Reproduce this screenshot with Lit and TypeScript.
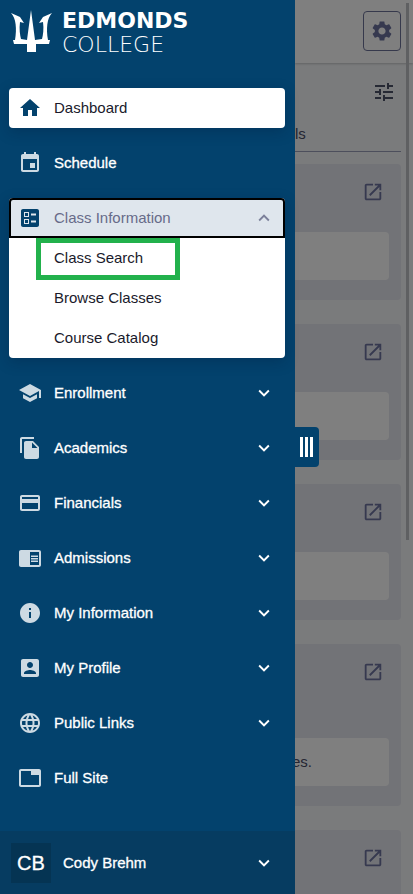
import { LitElement, html, css, svg, nothing } from "lit";
import { customElement, state } from "lit/decorators.js";

const icons: Record<string, string> = {
  home: "M10 20v-6h4v6h5v-8h3L12 3 2 12h3v8z",
  event: "M17 12h-5v5h5v-5zM16 1v2H8V1H6v2H5c-1.11 0-1.99.9-1.99 2L3 19c0 1.1.89 2 2 2h14c1.1 0 2-.9 2-2V5c0-1.1-.9-2-2-2h-1V1h-2zm3 18H5V8h14v11z",
  ballot: "M13 9.5h5v-2h-5v2zm0 7h5v-2h-5v2zm6 4.5H5c-1.100 0-2-.9-2-2V5c0-1.100.9-2 2-2h14c1.100 0 2 .9 2 2v14c0 1.100-.9 2-2 2zM6 11h5V6H6v5zm1-4h3v3H7V7zM6 18h5v-5H6v5zm1-4h3v3H7v-3z",
  school: "M5 13.180v4L12 21l7-3.820v-4L12 17l-7-3.820zM12 3L1 9l11 6 9-4.910V17h2V9L12 3z",
  copy: "M16 1H4c-1.100 0-2 .9-2 2v14h2V3h12V1zm-1 4l6 6v10c0 1.100-.9 2-2 2H7.990C6.890 23 6 22.100 6 21l.01-14c0-1.100.89-2 1.990-2h7zm-1 7h5.500L14 6.500V12z",
  card: "M20 4H4c-1.110 0-1.990.89-1.990 2L2 18c0 1.110.89 2 2 2h16c1.110 0 2-.89 2-2V6c0-1.110-.89-2-2-2zm0 14H4v-6h16v6zm0-10H4V6h16v2z",
  reader: "M13 12h7v1.500h-7V12zm0-2.500h7V11h-7V9.500zm0 5h7V16h-7v-1.500zM21 4H3c-1.100 0-2 .9-2 2v13c0 1.100.9 2 2 2h18c1.100 0 2-.9 2-2V6c0-1.100-.9-2-2-2zm0 15h-9V6h9v13z",
  info: "M12 2C6.480 2 2 6.480 2 12s4.480 10 10 10 10-4.480 10-10S17.520 2 12 2zm1 15h-2v-6h2v6zm0-8h-2V7h2v2z",
  profile: "M3 5v14c0 1.100.89 2 2 2h14c1.100 0 2-.9 2-2V5c0-1.100-.9-2-2-2H5c-1.110 0-2 .9-2 2zm12 4c0 1.660-1.340 3-3 3s-3-1.340-3-3 1.340-3 3-3 3 1.340 3 3zm-9 8c0-2 4-3.100 6-3.100s6 1.100 6 3.100v1H6v-1z",
  globe: "M11.990 2C6.470 2 2 6.480 2 12s4.470 10 9.990 10C17.520 22 22 17.520 22 12S17.520 2 11.990 2zm6.930 6h-2.950c-.32-1.250-.78-2.450-1.380-3.560 1.840.63 3.370 1.910 4.330 3.560zM12 4.040c.83 1.200 1.480 2.530 1.910 3.960h-3.820c.43-1.430 1.080-2.760 1.910-3.960zM4.260 14C4.100 13.360 4 12.690 4 12s.1-1.360.26-2h3.380c-.08.66-.14 1.320-.14 2s.06 1.340.14 2H4.260zm.82 2h2.950c.32 1.250.78 2.450 1.380 3.560-1.840-.63-3.370-1.900-4.330-3.560zm2.950-8H5.080c.96-1.660 2.490-2.930 4.330-3.560C8.810 5.550 8.350 6.750 8.030 8zM12 19.960c-.83-1.200-1.480-2.530-1.910-3.960h3.820c-.43 1.430-1.080 2.760-1.910 3.960zM14.340 14H9.660c-.09-.66-.16-1.320-.16-2s.07-1.350.16-2h4.680c.09.65.16 1.320.16 2s-.07 1.340-.16 2zm.25 5.560c.6-1.110 1.060-2.310 1.380-3.560h2.950c-.96 1.650-2.490 2.930-4.330 3.560zM16.360 14c.08-.66.14-1.320.14-2s-.06-1.340-.14-2h3.380c.16.64.26 1.310.26 2s-.1 1.360-.26 2h-3.380z",
  tab: "M21 3H3c-1.100 0-2 .9-2 2v14c0 1.100.9 2 2 2h18c1.100 0 2-.9 2-2V5c0-1.100-.9-2-2-2zm0 16H3V5h10v4h8v10z",
  more: "M16.590 8.590L12 13.170 7.410 8.590 6 10l6 6 6-6z",
  less: "M12 8l-6 6 1.410 1.410L12 10.830l4.590 4.580L18 14z",
  gear: "M19.140 12.940c.04-.3.06-.61.06-.94 0-.32-.02-.64-.07-.94l2.030-1.580c.18-.14.23-.41.12-.61l-1.920-3.320c-.12-.22-.37-.29-.59-.22l-2.390.96c-.5-.38-1.030-.7-1.620-.94l-.36-2.540c-.04-.24-.24-.41-.48-.41h-3.840c-.24 0-.43.17-.47.41l-.36 2.540c-.59.24-1.130.57-1.620.94l-2.390-.96c-.22-.08-.47 0-.59.22L2.740 8.870c-.12.21-.08.47.12.61l2.030 1.580c-.05.3-.09.63-.09.94s.02.64.07.94l-2.030 1.580c-.18.14-.23.41-.12.61l1.920 3.320c.12.22.37.29.59.22l2.390-.96c.5.38 1.030.7 1.620.94l.36 2.540c.05.24.24.41.48.41h3.840c.24 0 .44-.17.47-.41l.36-2.540c.59-.24 1.130-.56 1.620-.94l2.390.96c.22.08.47 0 .59-.22l1.920-3.320c.12-.22.07-.47-.12-.61l-2.010-1.580zM12 15.600c-1.980 0-3.600-1.620-3.600-3.600s1.620-3.600 3.600-3.600 3.600 1.620 3.600 3.600-1.620 3.600-3.600 3.600z",
  tune: "M3 17v2h6v-2H3zM3 5v2h10V5H3zm10 16v-2h8v-2h-8v-2h-2v6h2zM7 9v2H3v2h4v2h2V9H7zm14 4v-2H11v2h10zm-6-4h2V7h4V5h-4V3h-2v6z",
  launch: "M19 19H5V5h7V3H5c-1.110 0-2 .9-2 2v14c0 1.100.89 2 2 2h14c1.100 0 2-.9 2-2v-7h-2v7zM14 3v2h3.590l-9.830 9.830 1.410 1.410L19 6.410V10h2V3h-7z",
};

const icon = (name: string, cls = "icon") =>
  html`<svg class=${cls} viewBox="0 0 24 24" aria-hidden="true">${svg`<path d=${icons[name]}></path>`}</svg>`;

interface Item {
  label: string;
  icon: string;
  group?: boolean;
  children?: string[];
}

const items: Item[] = [
  { label: "Dashboard", icon: "home" },
  { label: "Schedule", icon: "event" },
  { label: "Class Information", icon: "ballot", group: true, children: ["Class Search", "Browse Classes", "Course Catalog"] },
  { label: "Enrollment", icon: "school", group: true },
  { label: "Academics", icon: "copy", group: true },
  { label: "Financials", icon: "card", group: true },
  { label: "Admissions", icon: "reader", group: true },
  { label: "My Information", icon: "info", group: true },
  { label: "My Profile", icon: "profile", group: true },
  { label: "Public Links", icon: "globe", group: true },
  { label: "Full Site", icon: "tab" },
];

@customElement("side-nav")
class SideNav extends LitElement {
  @state() private open = true;

  static styles = css`
    :host {
      display: flex;
      flex-direction: column;
      position: relative;
      background: #03426d;
      color: #fff;
      font: 15px/20px "Liberation Sans", Arial, sans-serif;
    }
    .brand {
      display: flex;
      gap: 10px;
      padding: 9px 0 0 11px;
      height: 79px;
      box-sizing: border-box;
      color: #fff;
      text-decoration: none;
    }
    .trident {
      width: 41px;
      height: 44px;
      fill: #fff;
    }
    .name {
      display: flex;
      flex-direction: column;
      font-family: "DejaVu Sans", sans-serif;
      font-size: 22px;
      line-height: 24px;
    }
    .bold {
      font-weight: 700;
    }
    .thin {
      font-weight: 200;
    }
    nav {
      display: flex;
      flex-direction: column;
      gap: 15px;
      padding: 9px 10px 0 9px;
      flex: 1;
    }
    .row {
      display: flex;
      align-items: center;
      gap: 12px;
      width: 100%;
      height: 40px;
      box-sizing: border-box;
      padding: 0 9px;
      border: 0;
      border-radius: 4px;
      background: none;
      color: #fff;
      font: inherit;
      -webkit-text-stroke: 0.3px #fff;
      text-align: left;
      text-decoration: none;
      cursor: pointer;
    }
    .label {
      flex: 1;
    }
    .icon {
      width: 24px;
      height: 24px;
      fill: #cddae3;
    }
    .chevron {
      width: 22px;
      height: 22px;
      margin: 1px;
      fill: #fff;
    }
    .row.active {
      background: #fff;
      color: #1a1a2b;
      -webkit-text-stroke: 0;
      box-shadow: 0 4px 14px rgba(0, 20, 50, 0.25);
    }
    .active .icon,
    .open .icon {
      fill: #03426d;
    }
    .group {
      border-radius: 4px;
      background: #fff;
      box-shadow: 0 4px 14px rgba(0, 20, 50, 0.25);
    }
    .row.open {
      padding: 0 7px;
      border: 2px solid #000;
      border-radius: 4px 4px 0 0;
      background: #dfe6ed;
      color: #676b89;
      -webkit-text-stroke: 0;
      outline: none;
    }
    .open .chevron {
      fill: #7c809a;
    }
    .sub {
      position: relative;
      display: block;
      padding: 10px 0 10px 45px;
      color: #1a1a2b;
      text-decoration: none;
    }
    .marked::before {
      content: "";
      position: absolute;
      inset: 0 105px -2px 27px;
      border: 5px solid #22b14c;
    }
    .user {
      display: flex;
      align-items: center;
      gap: 12px;
      height: 63px;
      padding: 0 19px 0 11px;
      border: 0;
      background: #063c61;
      color: #fff;
      font: inherit;
      -webkit-text-stroke: 0.3px #fff;
      text-align: left;
      cursor: pointer;
    }
    .avatar {
      width: 40px;
      background: #053453;
      font-size: 20px;
      line-height: 40px;
      text-align: center;
    }
    .handle {
      position: absolute;
      left: 100%;
      top: 427px;
      display: flex;
      align-items: center;
      gap: 2px;
      width: 24px;
      height: 40px;
      padding: 0 0 0 5px;
      border: 0;
      border-radius: 0 4px 4px 0;
      background: #03426d;
      cursor: pointer;
    }
    .bar {
      width: 3px;
      height: 20px;
      background: #fff;
    }
  `;

  private renderItem(item: Item, index: number) {
    if (item.children) {
      return html`<div class="group">
        <button class="row open" aria-expanded=${this.open} @click=${() => (this.open = !this.open)}>
          ${icon(item.icon)}<span class="label">${item.label}</span>${icon(this.open ? "less" : "more", "chevron")}
        </button>
        ${this.open
          ? item.children.map((c, i) => html`<a class="sub ${i === 0 ? "marked" : ""}" href="#">${c}</a>`)
          : nothing}
      </div>`;
    }
    return item.group
      ? html`<button class="row">${icon(item.icon)}<span class="label">${item.label}</span>${icon("more", "chevron")}</button>`
      : html`<a class="row ${index === 0 ? "active" : ""}" href="#">${icon(item.icon)}<span class="label">${item.label}</span></a>`;
  }

  render() {
    return html`
      <a class="brand" href="#">
        <svg class="trident" viewBox="0 0 41 44" aria-hidden="true">
          <path d="M0 4L9 8L13 14L9 13C8 20 9 26 10 30L16 31L20 1L24 31L31 30C32 26 33 20 32 13L28 14L32 8L41 4C36 9 35 20 37 31H39L38 35H25V43H16V35H3L2 31H4C6 20 5 9 0 4Z"></path>
        </svg>
        <span class="name"><span class="bold">EDMONDS</span><span class="thin">COLLEGE</span></span>
      </a>
      <nav aria-label="Main">${items.map((item, i) => this.renderItem(item, i))}</nav>
      <button class="user">
        <span class="avatar">CB</span><span class="label">Cody Brehm</span>${icon("more", "chevron")}
      </button>
      <button class="handle" aria-label="Toggle menu">
        <span class="bar"></span><span class="bar"></span><span class="bar"></span>
      </button>
    `;
  }
}

@customElement("app-root")
class AppRoot extends LitElement {
  static styles = css`
    :host {
      display: grid;
      grid-template-columns: 295px minmax(0, 1fr);
      height: 100vh;
      overflow: hidden;
      font: 15px/20px "Liberation Sans", Arial, sans-serif;
    }
    side-nav {
      z-index: 2;
    }
    .page {
      position: relative;
      overflow: hidden;
      background: #f4f6f8;
      color: #4a4c66;
    }
    .scrim {
      position: absolute;
      inset: 0;
      background: rgba(0, 0, 0, 0.5);
    }
    .thumb {
      position: absolute;
      top: 3px;
      right: 4px;
      width: 3px;
      height: 537px;
      background: #5f6062;
    }
    header {
      display: flex;
      justify-content: flex-end;
      padding: 11px 12px;
      height: 63px;
      box-sizing: border-box;
      background: #fff;
      box-shadow: 0 1px 2px rgba(0, 0, 0, 0.2);
    }
    button {
      display: grid;
      place-items: center;
      padding: 0;
      border: 0;
      background: none;
      cursor: pointer;
    }
    .settings {
      width: 38px;
      height: 40px;
      border: 1px solid #6c7399;
      border-radius: 4px;
    }
    .icon {
      width: 24px;
      height: 24px;
      fill: #6d739f;
    }
    .launch {
      width: 22px;
      height: 22px;
      fill: #6d739f;
    }
    .tune .icon {
      fill: #4c5268;
    }
    .toolbar {
      display: flex;
      justify-content: flex-end;
      padding: 17px 17px 0 0;
    }
    .tab {
      margin: 20px 12px 0 0;
      padding-bottom: 7px;
      border-bottom: 1px solid #9a9fb8;
    }
    .cards {
      display: flex;
      flex-direction: column;
      gap: 24px;
      padding: 12px 12px 0 0;
    }
    .card {
      padding: 16px 12px 20px 0;
      border-radius: 0 4px 4px 0;
      background: #e4e6ee;
    }
    .head {
      display: flex;
      justify-content: flex-end;
      height: 52px;
      padding-right: 4px;
    }
    .head.tall {
      height: 78px;
    }
    .head button {
      width: 24px;
      height: 24px;
    }
    .body {
      height: 48px;
      border-radius: 0 4px 4px 0;
      background: #fff;
      line-height: 48px;
      text-indent: -3px;
    }
  `;

  render() {
    return html`
      <side-nav></side-nav>
      <main class="page">
        <header><button class="settings" aria-label="Settings">${icon("gear")}</button></header>
        <div class="toolbar"><button class="tune" aria-label="Filters">${icon("tune")}</button></div>
        <div class="tab">ls</div>
        <section class="cards">
          ${["", "", "", "es.", ""].map(
            (text) => html`<article class="card">
              <div class="head ${text ? "tall" : ""}"><button aria-label="Open">${icon("launch", "launch")}</button></div>
              <div class="body">${text}</div>
            </article>`
          )}
        </section>
        <div class="scrim"></div>
        <div class="thumb"></div>
      </main>
    `;
  }
}
